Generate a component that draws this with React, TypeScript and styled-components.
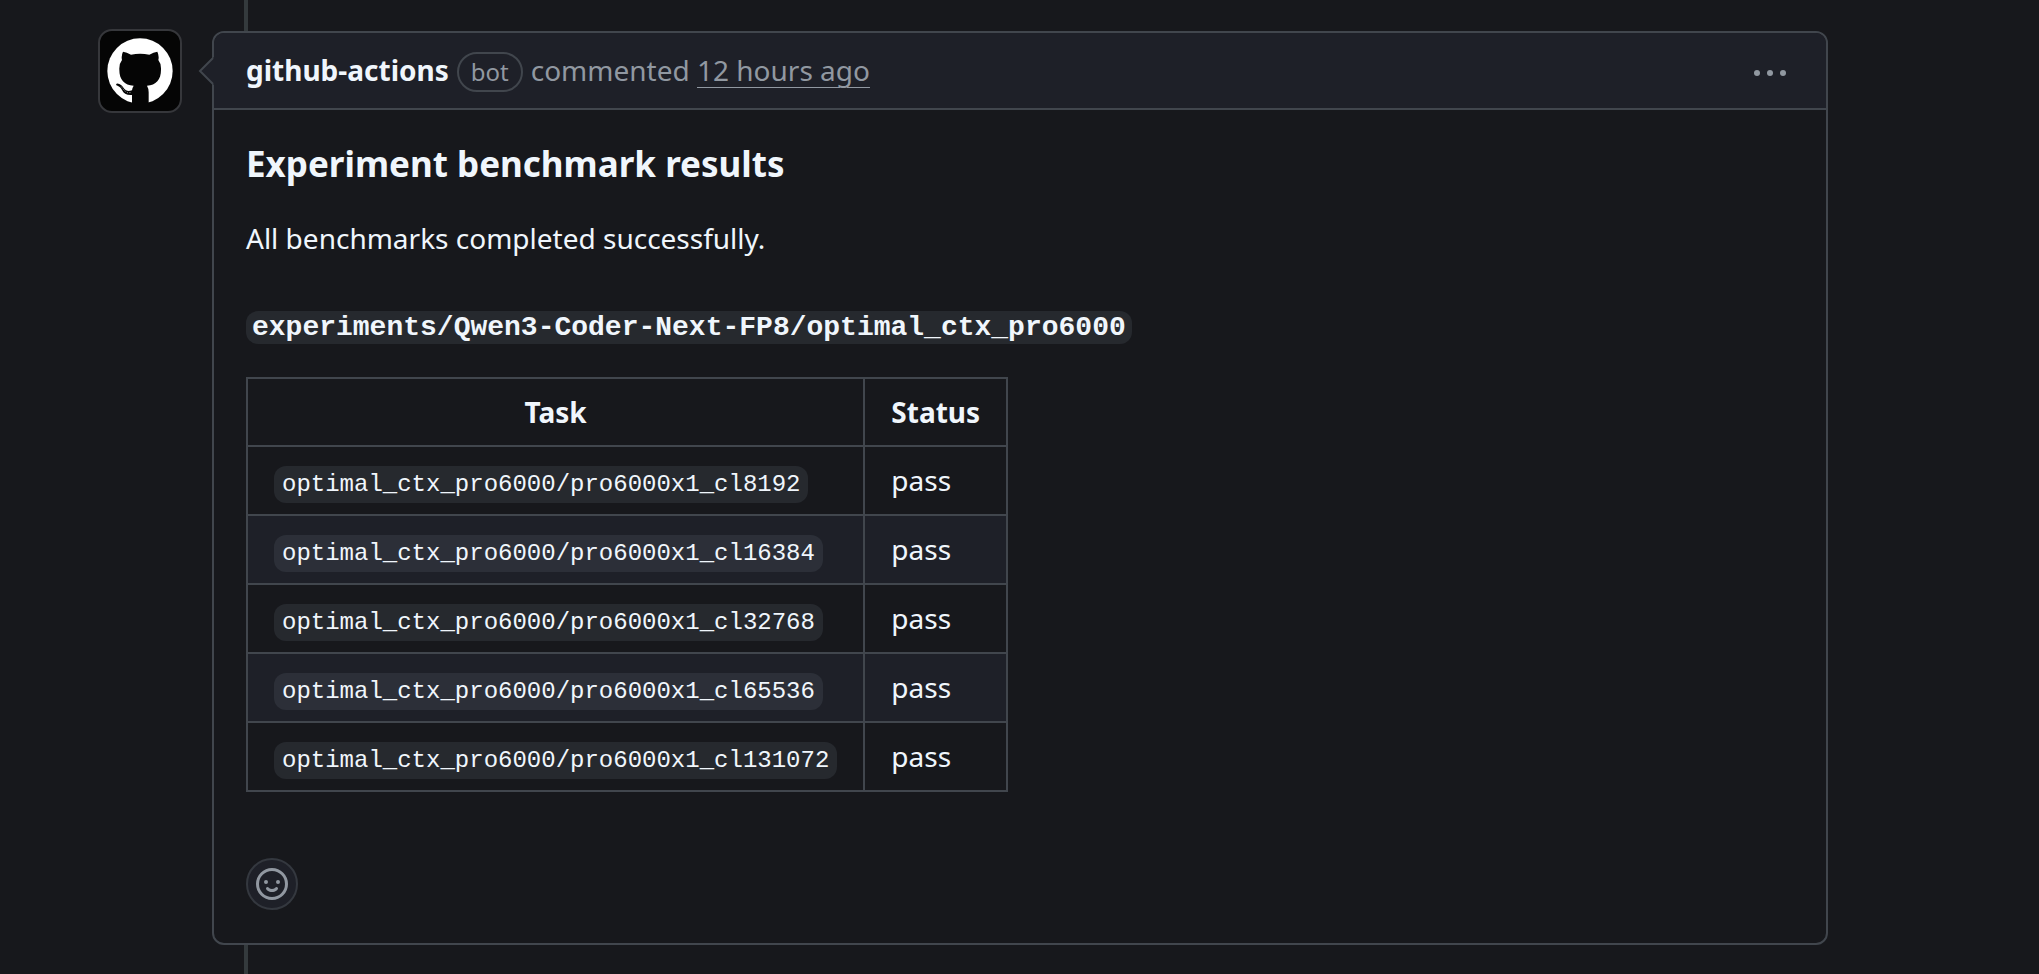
import React from "react";
import styled, { createGlobalStyle } from "styled-components";

const sans = `"Noto Sans", "Liberation Sans", sans-serif`;
const mono = `"Liberation Mono", monospace`;

const color = {
  canvas: "#17181c",
  subtle: "#1e2028",
  border: "#41464d",
  borderMuted: "#34383f",
  line: "#343a3d",
  text: "#f0f6fc",
  muted: "#9198a1",
  code: "rgba(101, 108, 118, 0.2)",
};

const GlobalStyle = createGlobalStyle`
  *, *::before, *::after { box-sizing: border-box; }
  html, body, #root { min-height: 100vh; }
  body {
    margin: 0;
    background: ${color.canvas};
    color: ${color.text};
    font-family: ${sans};
    font-size: 28px;
    line-height: 42px;
  }
`;

const Timeline = styled.main`
  display: grid;
  grid-template-columns: 84px minmax(0, 1fr);
  column-gap: 30px;
  padding: 0 211px 0 98px;
  min-height: 100vh;
`;

const Avatar = styled.a`
  display: flex;
  align-items: center;
  justify-content: center;
  width: 84px;
  height: 84px;
  margin-top: 29px;
  border: 2px solid #36373b;
  border-radius: 14px;
  background: #050505;
`;

const Thread = styled.div`
  display: flex;
  flex-direction: column;
`;

const Rail = styled.div<{ $grow?: boolean }>`
  width: 4px;
  height: ${(p) => (p.$grow ? "auto" : "31px")};
  flex: ${(p) => (p.$grow ? "1 0 auto" : "none")};
  margin-left: 32px;
  background: ${color.line};
`;

const Card = styled.article`
  position: relative;
  border: 2px solid ${color.border};
  border-radius: 12px;
`;

const Caret = styled.svg`
  position: absolute;
  top: 24px;
  left: -16px;
`;

const Header = styled.header`
  display: flex;
  align-items: center;
  justify-content: space-between;
  height: 77px;
  padding: 0 32px;
  border-bottom: 2px solid ${color.border};
  border-radius: 10px 10px 0 0;
  background: ${color.subtle};
  color: ${color.muted};
`;

const Byline = styled.div`
  display: flex;
  align-items: baseline;
  gap: 8px;
`;

const Author = styled.a`
  color: ${color.text};
  font-weight: 700;
  text-decoration: none;
`;

const BotLabel = styled.span`
  height: 40px;
  padding: 0 12px;
  border: 2px solid ${color.border};
  border-radius: 20px;
  font-size: 24px;
  line-height: 36px;
`;

const Timestamp = styled.a`
  color: inherit;
  text-decoration: underline;
  text-decoration-thickness: 1px;
  text-underline-offset: 6px;
`;

const MenuButton = styled.button`
  display: flex;
  padding: 0;
  border: 0;
  background: none;
  color: ${color.muted};
`;

const Body = styled.div`
  padding: 32px 32px 33px;
`;

const Title = styled.h3`
  margin: 0 0 31px;
  font-size: 35px;
  font-weight: 700;
  line-height: 44px;
`;

const Text = styled.p`
  margin: 0 0 48px;
`;

const Path = styled.h4`
  margin: 0 0 32px;
  font-size: 28px;
  font-weight: 700;
  line-height: 35px;
`;

const PathCode = styled.code`
  padding: 1px 6px;
  border-radius: 12px;
  background: ${color.code};
  font-family: ${mono};
  font-size: 28px;
`;

const Results = styled.table`
  border-collapse: collapse;
`;

const cell = `
  padding: 12px 26px;
  border: 2px solid ${color.border};
  vertical-align: baseline;
`;

const Head = styled.th`
  ${cell}
  font-weight: 700;
`;

const Row = styled.tr`
  height: 69px;

  &:nth-child(even) { background: ${color.subtle}; }
`;

const Cell = styled.td`
  ${cell}
`;

const Code = styled.code`
  padding: 5px 8px;
  border-radius: 12px;
  background: ${color.code};
  font-family: ${mono};
  font-size: 24px;
  line-height: 30px;
`;

const ReactButton = styled.button`
  display: flex;
  align-items: center;
  justify-content: center;
  width: 52px;
  height: 52px;
  margin-top: 66px;
  padding: 0;
  border: 2px solid ${color.borderMuted};
  border-radius: 50%;
  background: ${color.subtle};
  color: ${color.muted};
`;

const tasks = [8192, 16384, 32768, 65536, 131072].map((length) => ({
  name: `optimal_ctx_pro6000/pro6000x1_cl${length}`,
  status: "pass",
}));

function Mark() {
  return (
    <svg width="66" height="66" viewBox="39 41 198 198" aria-hidden="true">
      <circle cx="138" cy="140" r="98" fill="#fff" />
      <path
        fill="#050505"
        d="M87 82Q98 83 111 91Q138 86 166 91Q179 83 190 82Q196 94 193 107Q202 118 201 136C201 166 186 182 159 184Q164 192 164 204V241H114V212C98 213 89 208 84 197C80 188 75 187 66 182Q67 177 73 178C86 181 88 192 96 198Q103 202 114 198Q115 190 119 184C91 182 76 166 76 136Q75 118 84 107Q81 94 87 82Z"
      />
      <path d="M82 187 91 199 101 205H112" fill="none" stroke="#fff" strokeWidth="2" strokeDasharray="3 5" />
    </svg>
  );
}

function Smiley() {
  return (
    <svg width="32" height="32" viewBox="0 0 16 16" fill="currentColor" aria-hidden="true">
      <path d="M8 0a8 8 0 1 1 0 16A8 8 0 0 1 8 0ZM1.5 8a6.5 6.5 0 1 0 13 0 6.5 6.5 0 0 0-13 0Zm3.82 1.636a.75.75 0 0 1 1.038.175l.007.009c.103.118.22.222.35.31.264.178.683.37 1.285.37.602 0 1.02-.192 1.285-.371.13-.088.247-.192.35-.31l.007-.008a.75.75 0 0 1 1.222.87l-.022.03c-.182.248-.422.468-.717.67-.515.348-1.221.619-2.125.619-.904 0-1.61-.271-2.125-.62a3.28 3.28 0 0 1-.717-.67l-.022-.029a.75.75 0 0 1 .184-1.045ZM6 7a1 1 0 1 1-2 0 1 1 0 0 1 2 0Zm6 0a1 1 0 1 1-2 0 1 1 0 0 1 2 0Z" />
    </svg>
  );
}

export default function App() {
  return (
    <>
      <GlobalStyle />
      <Timeline>
        <Avatar href="#author" aria-label="github-actions">
          <Mark />
        </Avatar>
        <Thread>
          <Rail />
          <Card>
            <Header>
              <Byline>
                <Author href="#author">github-actions</Author>
                <BotLabel>bot</BotLabel>
                <span>
                  commented <Timestamp href="#comment">12 hours ago</Timestamp>
                </span>
              </Byline>
              <MenuButton aria-label="Show options">
                <svg width="48" height="32" viewBox="0 0 48 32" fill="currentColor" aria-hidden="true">
                  <circle cx="11" cy="18" r="3" />
                  <circle cx="24" cy="18" r="3" />
                  <circle cx="37" cy="18" r="3" />
                </svg>
              </MenuButton>
            </Header>
            <Caret width="16" height="28" viewBox="0 0 16 28" aria-hidden="true">
              <path d="M16 0 2 14l14 14z" fill={color.subtle} />
              <path d="M15 1 2 14l13 13" fill="none" stroke={color.border} strokeWidth="2" />
            </Caret>
            <Body>
              <Title>Experiment benchmark results</Title>
              <Text>All benchmarks completed successfully.</Text>
              <Path>
                <PathCode>experiments/Qwen3-Coder-Next-FP8/optimal_ctx_pro6000</PathCode>
              </Path>
              <Results>
                <thead>
                  <tr>
                    <Head scope="col">Task</Head>
                    <Head scope="col">Status</Head>
                  </tr>
                </thead>
                <tbody>
                  {tasks.map((task) => (
                    <Row key={task.name}>
                      <Cell>
                        <Code>{task.name}</Code>
                      </Cell>
                      <Cell>{task.status}</Cell>
                    </Row>
                  ))}
                </tbody>
              </Results>
              <ReactButton aria-label="Add reaction">
                <Smiley />
              </ReactButton>
            </Body>
          </Card>
          <Rail $grow />
        </Thread>
      </Timeline>
    </>
  );
}
